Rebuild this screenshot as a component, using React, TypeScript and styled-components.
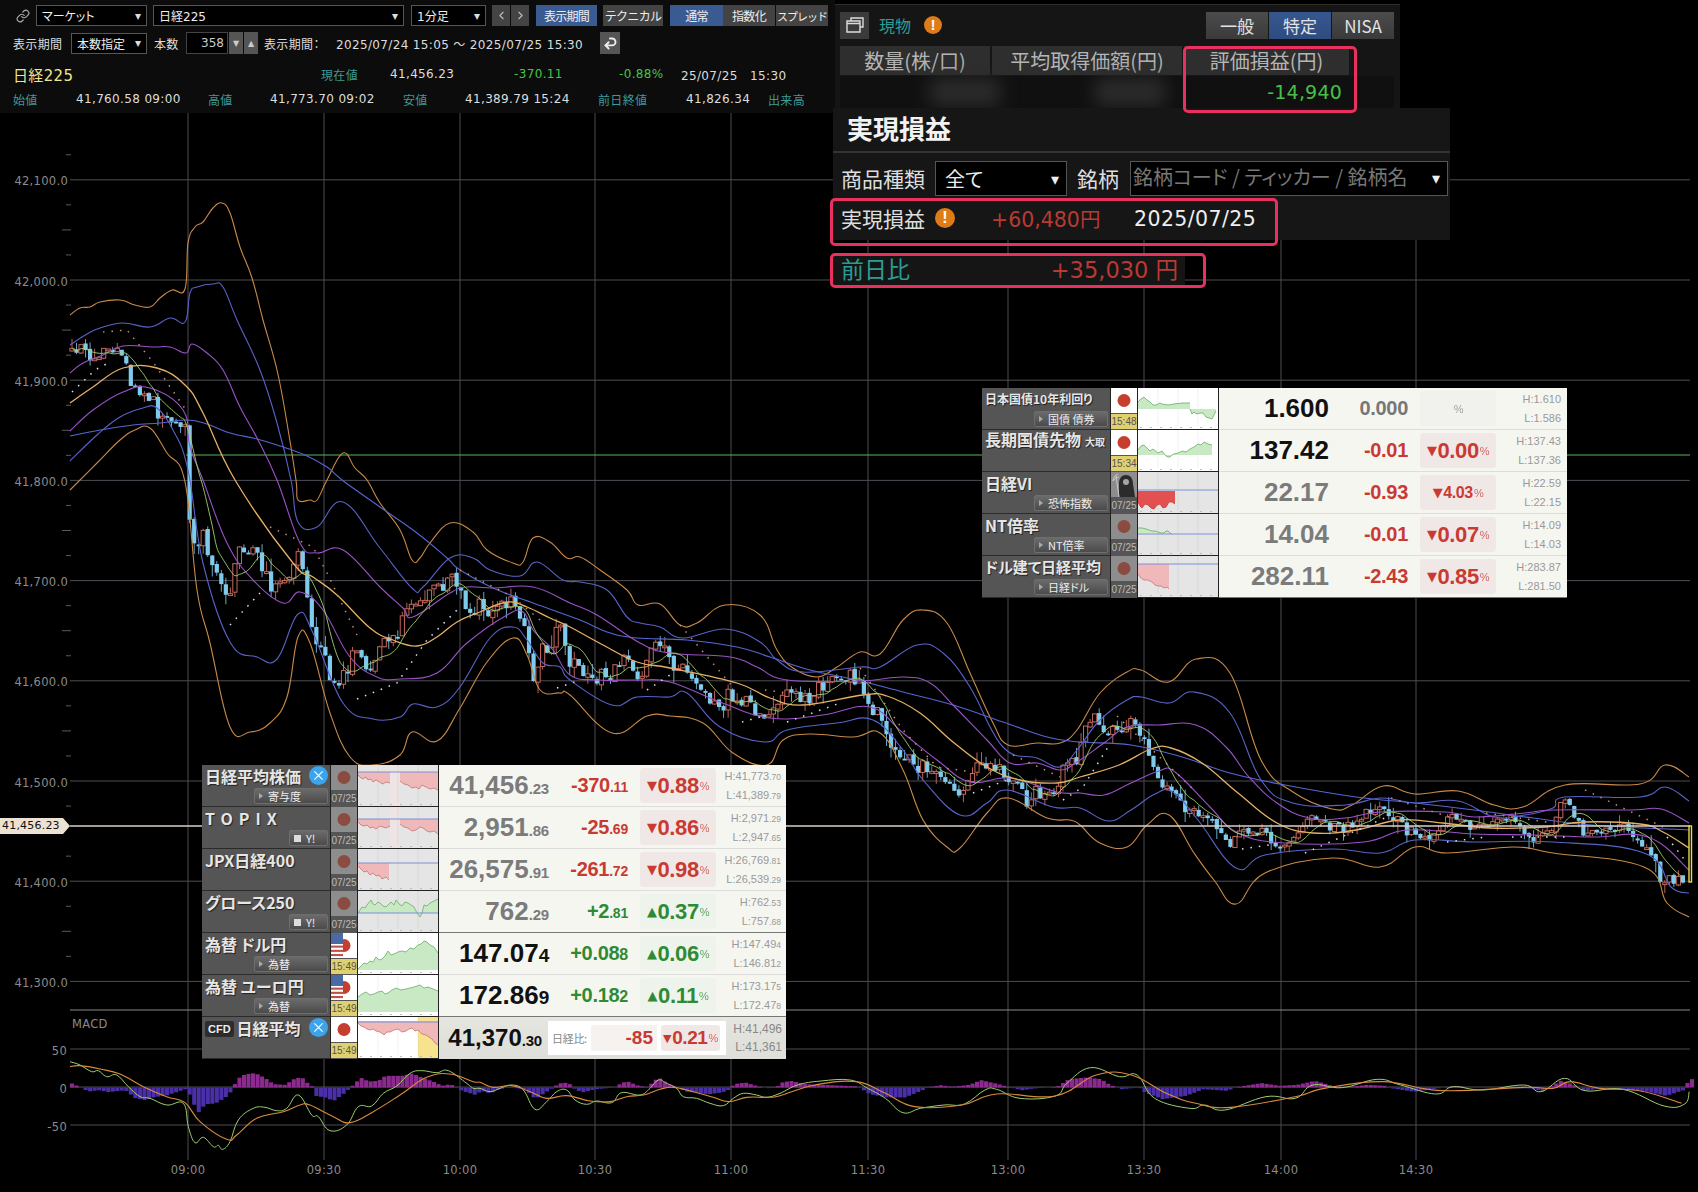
import React from 'react';
import styled, { createGlobalStyle } from 'styled-components';
import { Link as LinkIcon, Undo2, ChevronLeft, ChevronRight } from 'lucide-react';

const UI = '"DejaVu Sans","Noto Sans CJK JP",sans-serif';
const JP = '"Noto Sans CJK JP","Liberation Sans",sans-serif';
const NUM = '"Liberation Sans","Noto Sans CJK JP",sans-serif';

const Global = createGlobalStyle`
  html, body { margin: 0; padding: 0; background: #000; }
  body { font-family: ${UI}; font-feature-settings: "palt"; }
`;

/* ---------- chart geometry ---------- */
type P = number[];
const crop = (ox: number, oy: number, sx: number, sy: number, a: P): P =>
  a.map((v, i) => (i % 2 === 0 ? ox + v / sx : oy + v / sy));

const smooth = (a: P): string => {
  let d = `M${a[0]} ${a[1]}`;
  for (let i = 0; i < a.length - 2; i += 2) {
    const x0 = a[Math.max(i - 2, 0)], y0 = a[Math.max(i - 1, 1)];
    const x1 = a[i], y1 = a[i + 1], x2 = a[i + 2], y2 = a[i + 3];
    const x3 = a[Math.min(i + 4, a.length - 2)], y3 = a[Math.min(i + 5, a.length - 1)];
    const t = 5;
    d += `C${(x1 + (x2 - x0) / t).toFixed(1)} ${(y1 + (y2 - y0) / t).toFixed(1)} ${(x2 - (x3 - x1) / t).toFixed(1)} ${(y2 - (y3 - y1) / t).toFixed(1)} ${x2} ${y2}`;
  }
  return d;
};
const at = (a: P, x: number): number => {
  if (x <= a[0]) return a[1];
  for (let i = 0; i < a.length - 2; i += 2) {
    if (x <= a[i + 2]) return a[i + 1] + ((a[i + 3] - a[i + 1]) * (x - a[i])) / (a[i + 2] - a[i] || 1);
  }
  return a[a.length - 1];
};

const orangeUp: P = [70,315,80,308,90,307,100,302,120,300,135,305,150,307,160,298,172,290,185,289,188,243,195,227,203,222,213,208,222,203,230,213,240,247,252,278,263,320,277,370,287,423,296,480,298,500,310,500,317,500,327,480,343,453,355,468,367,480,380,503,400,530,412,560,420,558,430,543,450,523,473,532,487,550,513,563,523,562,533,538,550,542,567,558,580,557,600,570,627,590,638,605,660,604,680,625,697,623,725,605,760,615,777,650,793,668,817,677,837,667,860,652,880,654,903,620,923,610,947,623,970,673,993,723,1008,745,1037,743,1060,743,1077,730,1100,693,1127,672,1141,670,1169,682,1196,659,1230,673,1261,760,1293,792,1332,809,1352,805,1383,786,1415,794,1458,791,1494,805,1523,807,1565,785,1640,784,1665,765,1689,777];
const blueUp: P = [70,345,87,334,100,328,123,323,150,327,170,318,185,322,190,293,197,287,213,284,223,287,237,320,260,370,277,423,291,480,298,522,317,527,343,502,380,548,412,588,423,587,450,558,473,558,490,570,520,576,537,562,563,580,580,582,607,590,627,617,640,623,660,627,683,638,725,629,760,642,777,660,803,672,860,667,880,667,917,645,943,653,970,687,1003,747,1037,758,1060,767,1077,750,1100,720,1127,700,1141,697,1169,703,1194,692,1230,713,1261,780,1293,803,1345,805,1381,798,1415,803,1458,801,1494,817,1525,815,1553,808,1565,797,1640,797,1665,787,1689,801];
const longBlue: P = [70,436,100,430,133,425,160,423,187,420,207,424,230,433,257,439,280,446,305,455,327,467,342,480,380,507,417,533,447,558,460,570,493,588,533,603,580,620,607,632,637,638,687,640,737,647,770,657,810,670,857,680,903,692,953,705,1003,722,1047,737,1080,742,1131,745,1182,757,1230,773,1285,785,1356,797,1415,803,1474,810,1533,818,1592,825,1689,830];
const purpleUp: P = [70,373,83,363,103,355,123,346,153,347,170,347,186,353,192,344,207,353,223,370,240,407,257,438,277,480,300,543,317,553,343,550,380,587,403,608,413,617,450,593,467,587,493,588,533,587,570,603,597,615,640,643,670,653,730,657,757,667,787,680,860,681,903,677,930,683,953,705,987,740,1010,763,1037,763,1060,770,1077,762,1104,743,1127,727,1159,725,1196,725,1226,747,1249,777,1277,803,1309,818,1345,818,1380,812,1445,812,1474,817,1525,813,1553,810,1632,810,1661,809,1689,823];
const mid: P = [70,403,93,387,123,368,157,368,185,385,203,413,235,480,293,563,313,577,337,595,370,628,393,640,417,646,437,637,457,622,480,612,507,602,527,607,550,618,570,627,603,645,637,662,670,668,737,683,770,698,803,705,863,695,887,696,920,713,953,742,987,767,1020,780,1057,783,1080,777,1119,765,1151,749,1171,748,1202,763,1238,793,1277,823,1313,833,1356,830,1399,820,1443,823,1490,828,1545,827,1584,822,1640,824,1663,832,1689,848];
const purpleLo: P = [70,431,93,410,123,392,150,388,183,410,190,447,203,480,227,543,253,580,283,603,300,592,323,610,350,657,377,677,400,679,437,673,467,643,507,615,523,612,533,630,553,650,570,675,597,680,637,680,670,682,720,702,770,718,823,715,870,707,903,733,937,760,970,782,1010,778,1057,792,1080,793,1104,795,1131,783,1159,771,1175,772,1210,807,1238,833,1285,843,1364,842,1407,830,1474,834,1533,835,1592,837,1648,837,1689,870];
const blueLo: P = [70,461,97,435,120,417,143,408,157,408,173,430,188,470,203,563,230,642,257,657,277,659,298,614,313,633,343,703,373,719,400,717,413,704,437,707,460,687,490,638,513,627,527,640,543,663,560,667,570,680,612,705,637,697,670,697,687,693,720,727,765,742,787,730,837,723,873,720,903,750,923,780,960,815,987,803,1007,790,1053,807,1080,808,1108,821,1131,810,1155,794,1173,792,1198,820,1236,868,1265,855,1332,849,1380,853,1415,840,1474,842,1553,842,1644,853,1671,887,1689,893];
const orangeLo: P = [70,490,97,463,120,440,135,430,150,428,167,453,185,482,197,590,210,643,230,727,250,732,270,723,287,697,298,637,310,643,330,713,350,757,373,765,400,755,412,732,437,741,460,708,487,662,513,638,527,655,540,690,560,693,570,695,612,733,647,716,670,716,703,723,733,753,767,765,783,740,810,734,853,737,880,733,903,770,923,820,947,847,960,848,987,813,1008,798,1047,818,1070,820,1080,825,1100,843,1127,847,1147,825,1169,815,1194,853,1214,880,1236,904,1265,873,1332,858,1380,867,1415,847,1447,853,1514,847,1553,853,1644,867,1667,903,1689,917];
const price: P = [72,351,93,357,120,347,127,363,132,387,145,398,153,403,158,418,185,423,186,453,192,557,203,530,210,557,223,593,230,587,237,557,247,547,260,560,273,587,290,580,298,555,305,583,313,627,323,653,332,687,343,678,357,650,367,670,380,643,400,630,408,597,427,595,452,580,462,600,483,613,507,600,523,620,533,677,543,650,560,630,570,660,587,673,607,678,623,658,640,683,655,633,667,657,680,675,697,687,703,703,717,715,733,700,747,702,767,718,783,700,790,690,810,697,827,680,853,675,863,695,873,708,887,733,900,763,913,763,933,768,948,787,963,790,983,760,1000,773,1020,793,1053,795,1062,767,1077,757,1090,723,1092,717,1115,733,1131,720,1147,748,1155,777,1175,793,1186,812,1206,813,1218,833,1230,847,1238,833,1261,832,1273,843,1289,847,1313,813,1328,828,1348,827,1380,803,1407,830,1435,837,1449,817,1474,830,1514,818,1531,840,1549,833,1563,797,1573,810,1586,837,1624,823,1636,837,1650,850,1659,873,1663,880,1689,882];

const BAR = 4.525;
let seed = 17;
const rnd = () => { seed = (seed * 16807) % 2147483647; return seed / 2147483647; };
type Candle = { x: number; o: number; c: number; h: number; l: number };
const candles: Candle[] = [];
{
  let prev = at(price, 70);
  for (let x = 72; x < 1687; x += BAR) {
    const amp = x > 190 && x < 1110 ? 17 : 10;
    const big = rnd() > 0.9 ? 1.8 : 1;
    const c = at(price, x) + (rnd() - 0.5) * amp * big;
    const o = prev;
    const top = Math.min(o, c), bot = Math.max(o, c);
    candles.push({ x, o, c, h: top - rnd() * rnd() * 14, l: bot + rnd() * rnd() * 14 });
    prev = c + (rnd() - 0.5) * 3;
  }
}
const ma: P = [];
candles.forEach((k, i) => {
  const w = candles.slice(Math.max(0, i - 6), i + 1);
  ma.push(+k.x.toFixed(1), +(w.reduce((s, q) => s + q.c, 0) / w.length).toFixed(1));
});

const sarAbove: P[] = [[103,332,127,330,153,362,186,410],[270,527,313,547,327,573,357,635],[460,570,513,597,540,620],[680,625,710,660,733,687],[765,690,787,693],[860,668,903,730,937,767,973,772],[1013,755,1060,777],[1117,716,1194,790],[1391,798,1474,825],[1486,813,1553,823],[1585,790,1663,827]];
const sarBelow: P[] = [[72,392,95,370,110,362],[230,625,260,593],[357,699,397,683,427,640,457,610],[557,688,580,680],[647,690,673,673],[742,722,760,717],[787,722,843,702],[973,793,1007,780],[1063,800,1083,787,1108,747],[1242,849,1269,845],[1305,853,1387,817],[1447,842,1486,837],[1512,837,1565,837],[1667,837,1687,863]];

const y = (p: number) => 781 + (41500 - p) * 1.002;
const priceLabels = [42100, 42000, 41900, 41800, 41700, 41600, 41500, 41400, 41300];
const ticks: number[] = [];
for (let p = 42125; p >= 41325; p -= 25) if (p % 100 !== 0 && p !== 41450) ticks.push(p);
const times: [number, string][] = [[188,'09:00'],[324,'09:30'],[460,'10:00'],[595,'10:30'],[731,'11:00'],[868,'11:30'],[1008,'13:00'],[1144,'13:30'],[1281,'14:00'],[1416,'14:30']];

const histCtl: P = [
  ...[210,12,230,3,260,-12,290,-8,320,-14,350,-10,370,-8,400,-32,430,-38,460,-28,490,-25,520,-15,550,-5,570,-30,585,-80,610,-50,640,-48,670,-30,690,-10,705,25,730,40,760,43,790,28,815,10,850,8,880,28,900,30,920,10,935,0,940,-25,970,-30,995,-40,1030,-15,1045,0,1060,12,1075,30,1100,18,1130,20,1150,35,1200,35,1230,42,1260,30,1300,15,1320,5,1345,10,1365,0,1380,-10,1420,-22].map(v => v / 3),
  ...[0,-10,25,-18,50,-5,80,0,130,-5,160,-35,190,-15,215,0,230,12,260,15,270,0,300,-15,340,-5,400,0,420,15,440,17,470,5,500,0,510,15,530,30,560,10,590,0,610,-12,680,-20,720,-15,745,-5,755,10,790,15,830,3,860,-2,890,5].map((v,i)=> i%2===0 ? 480+v/3 : v/3),
  ...[0,15,15,20,40,10,70,8,130,3,150,-20,180,-30,210,-30,240,-8,250,0,270,7,290,2,320,8,340,22,370,10,390,0,410,-8,430,-3,470,2,490,25,520,30,545,25,560,8,580,-5,610,0,620,-15,650,-35,690,-25,720,-5,760,-10,775,0,800,8,820,13,850,5,880,8,910,20,940,5,960,0,1000,8,1030,5,1040,-2,1080,-13,1130,0,1150,5,1170,0,1200,0,1280,-3,1300,-12,1330,20,1350,10,1370,-10,1400,-3,1470,-10,1510,-25,1540,-8,1550,25].map((v,i)=> i%2===0 ? 780+v/1.708 : v/3),
];
const hist: { x: number; h: number }[] = [];
for (let x = 70; x < 1690; x += BAR) hist.push({ x, h: at(histCtl, x) });

const macdGreen: P = [
  ...crop(0,1000,3,3,[210,185,240,195,275,215,295,212,320,230,350,225,385,260,420,290,450,295,500,315,550,310,565,380,585,428,610,412,640,440,655,436,668,448,690,425,715,360,760,325,795,322,830,332,860,325,895,285,935,345,955,350,990,392,1040,375,1075,320,1115,318,1150,280,1190,258,1230,220,1265,212,1310,218,1345,212,1400,250,1420,265]),
  ...crop(480,1040,3,3,[0,145,30,155,60,145,95,135,130,150,165,208,200,185,230,155,260,150,285,180,320,193,350,183,395,188,425,158,480,165,510,145,535,120,560,130,590,145,610,170,650,175,690,190,730,197,760,175,790,160,830,165,860,172]),
  ...crop(780,1030,1.708,3,[0,190,30,165,70,153,120,150,150,175,180,205,210,248,240,235,280,225,315,222,350,180,370,178,410,205,470,198,490,160,530,113,580,140,610,135,640,205,700,235,725,225,760,240,830,200,880,205,910,165,960,173,1020,148,1060,165,1120,192,1150,170,1200,180,1270,165,1300,185,1340,145,1375,182,1440,178,1510,228,1545,222,1553,185]),
];
const macdOrange: P = [
  ...crop(0,1000,3,3,[210,200,240,197,300,207,360,222,430,260,500,290,555,308,600,365,680,418,710,405,770,355,850,335,900,315,930,315,1000,350,1050,368,1120,335,1200,285,1280,232,1350,222,1420,245]),
  ...crop(480,1040,3,3,[0,127,40,142,95,137,150,155,200,175,260,167,330,183,390,185,440,170,490,165,540,148,580,142,640,155,700,172,745,185,800,172,860,172]),
  ...crop(780,1030,1.708,3,[0,197,60,165,130,155,180,190,230,230,310,225,370,192,470,198,540,135,600,135,660,190,710,220,770,232,880,200,930,175,1030,155,1130,182,1270,172,1320,175,1350,155,1400,175,1470,183,1540,220]),
];

/* ---------- page ---------- */
const Page = styled.div`
  width: 1698px; height: 1192px; position: relative; overflow: hidden;
  background: #000; color: #ddd; font-size: 12px;
`;
const ChartSvg = styled.svg`
  display: block; width: 1698px; height: 1079px;
`;
const AxisText = styled.text`
  font-family: "DejaVu Sans", sans-serif; font-size: 11.5px; fill: #8b8b8b; letter-spacing: .3px;
`;
const PriceTag = styled.div`
  position: absolute; left: 0; top: 818px; width: 70px; height: 16px;
  background: #ece2d4; color: #111; font-size: 11px; line-height: 16px; padding-left: 2px; box-sizing: border-box;
  clip-path: polygon(0 0, 90% 0, 100% 50%, 90% 100%, 0 100%); letter-spacing: .2px;
`;

/* ---------- tool panel ---------- */
const ToolPanel = styled.header`
  width: 835px; height: 113px; box-sizing: border-box; background: #0c0c0c;
  display: flex; flex-direction: column; padding-top: 5px;
`;
const ToolRow = styled.div<{ $h?: number; $top?: number }>`
  display: flex; align-items: center; height: ${p => p.$h ?? 21}px; margin-top: ${p => p.$top ?? 0}px; padding-left: 13px;
`;
const LinkSlot = styled.span`
  width: 23px; display: flex; justify-content: flex-end; padding-right: 6px; box-sizing: border-box; color: #aaa;
`;
const SelectBox = styled.div<{ $w: number; $ml?: number }>`
  width: ${p => p.$w}px; margin-left: ${p => p.$ml ?? 0}px; height: 21px; box-sizing: border-box;
  background: #000; border: 1px solid #555; display: flex; align-items: center; justify-content: space-between;
  padding: 0 5px; font-size: 12px; color: #eee; font-family: ${UI};
  &::after { content: '▾'; font-size: 12px; color: #ddd; }
`;
const NavBtn = styled.span`
  width: 18px; height: 21px; background: #444; color: #bbb; display: flex; align-items: center; justify-content: center;
`;
const NavPair = styled.div`
  display: flex; gap: 1px; margin-left: 6px;
`;
const ToolBtn = styled.button<{ $w: number; $ml?: number; $on?: boolean; $tight?: boolean }>`
  width: ${p => p.$w}px; margin-left: ${p => p.$ml ?? 0}px; height: 21px; padding: 0; border: 0;
  background: ${p => (p.$on ? '#3a5b92' : '#434343')}; color: #eee; font-size: ${p => (p.$tight ? 11 : 12)}px; font-family: ${JP};
  letter-spacing: ${p => (p.$tight ? -1 : -0.7)}px; white-space: nowrap;
`;
const Lbl = styled.span<{ $w?: number; $c?: string; $s?: number; $ml?: number }>`
  display: inline-block; width: ${p => (p.$w ? `${p.$w}px` : 'auto')}; flex: none; margin-left: ${p => p.$ml ?? 0}px;
  color: ${p => p.$c ?? '#ddd'}; font-size: ${p => p.$s ?? 12}px; letter-spacing: .35px; white-space: nowrap;
`;
const NumInput = styled.div`
  width: 42px; height: 22px; box-sizing: border-box; background: #000; border: 1px solid #444; color: #ccc;
  text-align: right; padding-right: 3px; line-height: 20px;
`;
const Spin = styled.div`
  display: flex; gap: 1px; margin: 0 6px 0 1px;
`;
const SpinBtn = styled.span`
  width: 14px; height: 22px; background: #555; color: #ccc; font-size: 8px; display: flex; align-items: center; justify-content: center;
`;
const UndoBtn = styled.span`
  width: 20px; height: 22px; background: #555; color: #eee; display: flex; align-items: center; justify-content: center;
  & svg { transform: scaleY(-1); }
`;

/* ---------- position / realised panels ---------- */
const Highlight = styled.div<{ $l: number; $t: number; $w: number; $h: number }>`
  position: absolute; left: ${p => p.$l}px; top: ${p => p.$t}px; width: ${p => p.$w}px; height: ${p => p.$h}px;
  box-sizing: border-box; border: 3px solid #e8315f; border-radius: 5px; pointer-events: none;
`;
const PosPanel = styled.section`
  position: absolute; left: 835px; top: 4px; width: 565px; height: 104px; box-sizing: border-box;
  background: #151515; border-top: 1px solid #2e2e2e; padding: 6px 6px 0 5px;
`;
const PosHead = styled.div`
  display: flex; align-items: center; height: 28px;
`;
const WinBtn = styled.span`
  width: 29px; height: 27px; background: #3b3b3b; color: #ddd; display: flex; align-items: center; justify-content: center;
`;
const Teal = styled.span<{ $s?: number; $ml?: number; $mr?: number }>`
  color: #2a9d98; font-size: ${p => p.$s ?? 16}px; font-family: ${JP}; margin: 0 ${p => p.$mr ?? 0}px 0 ${p => p.$ml ?? 0}px;
`;
const WarnDot = styled.span<{ $s?: number }>`
  width: ${p => p.$s ?? 18}px; height: ${p => p.$s ?? 18}px; border-radius: 50%; background: #df7c19; color: #fff;
  font-weight: bold; font-size: ${p => (p.$s ?? 18) - 4}px; font-family: ${NUM}; display: inline-flex; align-items: center; justify-content: center;
  flex: none;
`;
const Seg = styled.div`
  margin-left: auto; display: flex; gap: 1px;
`;
const SegBtn = styled.span<{ $on?: boolean }>`
  width: 62px; height: 27px; background: ${p => (p.$on ? 'linear-gradient(#36578f,#2e4c80)' : 'linear-gradient(#4c4c4c,#3a3a3a)')};
  color: #e2e2e2; font-size: 17px; font-family: ${JP}; display: flex; align-items: center; justify-content: center;
`;
const TableHead = styled.div`
  display: flex; gap: 2px; margin-top: 7px; height: 29px;
`;
const Th = styled.div<{ $w: number }>`
  width: ${p => p.$w}px; background: #2e2e2e; color: #b5b5b5; font-size: 20px; font-family: ${JP};
  display: flex; align-items: center; justify-content: center; white-space: nowrap;
`;
const TableBody = styled.div`
  position: relative; height: 32px; display: flex; align-items: center; justify-content: flex-end;
  padding-right: 52px; background: #101010; margin-top: 1px;
`;
const Blur = styled.span<{ $l: number }>`
  position: absolute; left: ${p => p.$l}px; top: 2px; width: 70px; height: 28px; background: #2c2c2c; filter: blur(9px);
`;
const GreenVal = styled.span`
  color: #48c048; font-size: 19px; font-family: "DejaVu Sans", sans-serif; position: relative; letter-spacing: .2px;
`;
const RealPanel = styled.section`
  position: absolute; left: 833px; top: 108px; width: 617px; height: 132px; background: #161616;
`;
const RealTitle = styled.h2`
  margin: 0; height: 45px; box-sizing: border-box; padding-left: 14px; line-height: 40px; color: #f2f2f2; font-size: 26px;
  font-weight: 700; font-family: ${JP}; border-bottom: 2px solid #333;
`;
const FilterRow = styled.div`
  display: flex; align-items: center; height: 36px; margin-top: 7px; padding-left: 8px;
`;
const FilterLabel = styled.span<{ $w: number; $ml?: number }>`
  width: ${p => p.$w}px; color: #dedede; font-size: 21px; font-family: ${JP}; flex: none; margin-left: ${p => p.$ml ?? 0}px; white-space: nowrap;
`;
const FilterSelect = styled.div<{ $w: number; $ph?: boolean }>`
  width: ${p => p.$w}px; height: 35px; box-sizing: border-box; background: #000; border: 1px solid #555; flex: none;
  color: ${p => (p.$ph ? '#777' : '#eee')}; font-size: 20px; font-family: ${JP}; display: flex; align-items: center; justify-content: space-between;
  padding: 0 7px ${p => (p.$ph ? 3 : 0)}px ${p => (p.$ph ? 2 : 9)}px; white-space: nowrap;
  &::after { content: '▾'; color: #eee; font-size: 16px; }
`;
const ResultRow = styled.div`
  display: flex; align-items: center; height: 38px; margin-top: 3px; padding-left: 8px; font-size: 20px;
`;
const RedVal = styled.span<{ $w?: number; $ml?: number; $s?: number }>`
  color: #b93a34; font-size: ${p => p.$s ?? 20.5}px; font-family: "DejaVu Sans", ${JP}; flex: none; white-space: nowrap;
  width: ${p => (p.$w ? `${p.$w}px` : 'auto')}; margin-left: ${p => p.$ml ?? 0}px;
`;
const DateVal = styled.span`
  color: #eee; font-size: 20.5px; font-family: "DejaVu Sans", sans-serif; letter-spacing: .4px; margin-top: 2px;
`;
const PrevPanel = styled.section`
  position: absolute; left: 833px; top: 253px; width: 352px; height: 33px; background: #151515;
  display: flex; align-items: center; justify-content: space-between; padding: 0 7px 4px 8px; box-sizing: border-box;
`;

/* ---------- quote widgets ---------- */
const Widget = styled.section<{ $l: number; $t: number; $w: number }>`
  position: absolute; left: ${p => p.$l}px; top: ${p => p.$t}px; width: ${p => p.$w}px;
  display: flex; flex-direction: column; background: #222;
`;
const WRow = styled.div`
  display: flex; height: 42px; gap: 1px;
`;
const NameCell = styled.div`
  width: 128px; flex: none; box-sizing: border-box; background: #555; padding: 0 2px 1px 3px; border-bottom: 1px solid #2a2a2a;
  display: flex; flex-direction: column; justify-content: space-between;
`;
const NameTop = styled.div`
  display: flex; align-items: center; justify-content: space-between; height: 21px;
`;
const Name = styled.span<{ $s?: number; $sp?: number }>`
  color: #e6e6e6; font-weight: 700; font-size: ${p => p.$s ?? 16}px; font-family: ${JP}; white-space: nowrap; line-height: 20px;
  letter-spacing: ${p => p.$sp ?? 0}px; text-shadow: 1px 1px 1px #222;
`;
const NameMini = styled.small`
  font-size: 10px; margin-left: 4px; letter-spacing: 0;
`;
const CfdTag = styled.span`
  background: #2d2d2d; color: #eee; font: bold 11px ${NUM}; padding: 2px 3px; border-radius: 2px; margin-right: 3px; vertical-align: 2px;
`;
const XDot = styled.span`
  width: 19px; height: 19px; border-radius: 50%; background: #3da3ea; color: #fff; display: flex; align-items: center; justify-content: center; flex: none;
`;
const SubRow = styled.div`
  display: flex; justify-content: flex-end; height: 17px;
`;
const SubBtn = styled.span<{ $w?: number }>`
  width: ${p => p.$w ?? 74}px; height: 16px; box-sizing: border-box; background: linear-gradient(#6b6b6b,#4b4b4b); border: 1px solid #6e6e6e; border-radius: 2px;
  color: #eee; font-size: 11px; font-family: ${JP}; display: flex; align-items: center; gap: 5px; padding-left: 4px; white-space: nowrap;
`;
const SubArrow = styled.i`
  width: 0; height: 0; border-left: 4px solid #aaa; border-top: 3px solid transparent; border-bottom: 3px solid transparent; flex: none;
`;
const YIcon = styled.i`
  width: 7px; height: 7px; background: #ddd; flex: none;
`;
const FlagCol = styled.div`
  width: 26px; flex: none; display: flex; flex-direction: column; gap: 1px; background: #555;
`;
const FlagBox = styled.div<{ $live?: boolean }>`
  height: 25px; background: ${p => (p.$live ? '#fff' : '#8d8d8d')}; display: block;
`;
const FlagTime = styled.div<{ $live?: boolean }>`
  height: 15px; background: ${p => (p.$live ? '#e1d06f' : 'transparent')}; color: ${p => (p.$live ? '#555' : '#bbb')};
  font: 10px ${NUM}; line-height: 15px; text-align: center;
`;
const ThumbBox = styled.svg`
  width: 80px; height: 41px; flex: none; display: block;
`;
const DataCell = styled.div<{ $dark?: boolean }>`
  flex: 1; min-width: 0; display: grid; grid-template-columns: 110px 79px 88px 65px;
  align-items: center; background: #f6f6f1; border-bottom: 1px solid ${p => (p.$dark ? '#777' : '#ddd')};
`;
const PctSlot = styled.div`
  padding-left: 12px;
`;
const CfdData = styled.div`
  flex: 1; min-width: 0; display: flex; align-items: center; background: linear-gradient(#e6e6e0,#dededa);
`;
const Main = styled.span<{ $live?: boolean; $s?: number; $w?: number }>`
  text-align: right; font: bold ${p => p.$s ?? 26}px ${NUM}; color: ${p => (p.$live ? '#111' : '#7b7b7b')}; white-space: nowrap;
  flex: none; width: ${p => (p.$w ? `${p.$w}px` : 'auto')};
`;
const Dec = styled.span<{ $s?: number }>`
  font-size: ${p => p.$s ?? 15}px; letter-spacing: -.2px;
`;
const Chg = styled.span<{ $tone: string }>`
  text-align: right; font: bold 20px ${NUM}; letter-spacing: -.3px; white-space: nowrap;
  color: ${p => (p.$tone === 'red' ? '#c93a33' : p.$tone === 'green' ? '#2f8a35' : '#777')};
`;
const PctBox = styled.span<{ $tone: string; $s?: number; $h?: number; $w?: number }>`
  height: ${p => p.$h ?? 35}px; width: ${p => p.$w ?? 76}px; box-sizing: border-box; border-radius: 3px; display: flex; align-items: center; justify-content: center;
  background: ${p => (p.$tone === 'red' ? '#f0e8e6' : p.$tone === 'green' ? '#eef3ec' : '#f1f1ed')};
  color: ${p => (p.$tone === 'red' ? '#c93a33' : p.$tone === 'green' ? '#2f8a35' : '#888')};
  font: bold ${p => p.$s ?? 22}px ${NUM}; letter-spacing: -.4px; white-space: nowrap;
`;
const Arrow = styled.span<{ $s?: number }>`
  font: ${p => p.$s ?? 13}px "DejaVu Sans", sans-serif; margin-right: 1px;
`;
const Unit = styled.span`
  font: 11px ${NUM}; color: inherit; opacity: .75; margin-left: 1px;
`;
const HL = styled.div`
  display: flex; flex-direction: column; align-items: flex-end; font: 11px ${NUM}; color: #999; line-height: 18px; white-space: nowrap;
`;
const HLDec = styled.span`
  font-size: 8.5px;
`;
const CompareBox = styled.div`
  width: 178px; margin-left: 6px; height: 34px; box-sizing: border-box; background: #fff; display: flex; align-items: center; padding: 0 4px; gap: 4px;
`;
const CompareLabel = styled.span`
  color: #888; font: 11px ${JP}; white-space: nowrap; letter-spacing: -.3px; width: 35px; flex: none;
`;
const CompareVal = styled.span`
  width: 66px; height: 26px; background: #f5f2f0; border-radius: 2px; display: flex; align-items: center; justify-content: flex-end; padding-right: 4px; box-sizing: border-box;
  color: #c93a33; font: bold 19px ${NUM}; flex: none;
`;
const CfdHL = styled(HL)`
  margin-left: auto; padding-right: 4px; color: #888; font-size: 12px;
`;

/* ---------- small drawings ---------- */
const XMark = () => (
  <svg width="11" height="11" viewBox="0 0 24 24" fill="none" stroke="#fff" strokeWidth="2.6"><path d="M3 3l18 18M21 3L3 21" /></svg>
);
const FlagArt = ({ kind, live }: { kind: string; live: boolean }) => {
  if (kind === 'reaper')
    return (
      <svg width="26" height="25" viewBox="0 0 26 25">
        <path d="M8 25V12c0-6 3-9 7-9s7 3 7 9l2 13z" fill="#2b2b2b" />
        <circle cx="15" cy="10" r="3" fill="#a5a5a5" />
        <path d="M7 2C4 3 2 6 2 9c2-3 4-4 6-4M5 4l3 21" stroke="#ccc" strokeWidth="1" fill="none" />
      </svg>
    );
  return (
    <svg width="26" height="25" viewBox="0 0 26 25">
      <circle cx="13" cy="12.5" r="6.5" fill={live ? '#c63f2e' : '#8b4b40'} />
      {kind === 'us' && (
        <g>
          <rect x="0" y="0" width="12" height="25" fill="#fff" />
          {[0, 1, 2, 3, 4, 5].map(i => <rect key={i} x="0" y={i * 4.2} width="12" height="2.1" fill="#c0504a" />)}
          <rect x="0" y="0" width="12" height="11" fill="#4a6aa5" />
        </g>
      )}
    </svg>
  );
};
type Thumb = { bg: string; base: number; color: string; fill: string; segs: P[]; blue?: number; yellow?: boolean; shade?: number[] };
const ThumbArt = ({ t }: { t: Thumb }) => (
  <ThumbBox viewBox="0 0 80 41">
    <rect width="80" height="41" fill={t.bg} />
    {t.shade && <rect x={t.shade[0]} width={t.shade[1]} height="41" fill="#eee4e4" />}
    {t.yellow && <rect x="60" width="20" height="41" fill="#f7e38e" />}
    {[20, 40, 60].map(x => <line key={x} x1={x} x2={x} y1="0" y2="38" stroke="#0000000f" />)}
    {t.segs.map((s, i) => {
      const pts = s.reduce<string[]>((acc, v, k) => (k % 2 === 0 ? [...acc, `${v},${s[k + 1]}`] : acc), []);
      return (
        <g key={i}>
          <polygon points={`${s[0]},${t.base} ${pts.join(' ')} ${s[s.length - 2]},${t.base}`} fill={t.fill} />
          <polyline points={pts.join(' ')} fill="none" stroke={t.color} strokeWidth=".8" />
        </g>
      );
    })}
    {t.blue !== undefined && <line x1="0" x2="80" y1={t.blue} y2={t.blue} stroke="#7d8fd8" strokeWidth="1" />}
    <line x1="2" x2="78" y1="39.5" y2="39.5" stroke="#bbb" strokeDasharray="2 8" />
  </ThumbBox>
);

const RED = { color: '#c97272', fill: '#f0b9b9' };
const GRN = { color: '#68ad68', fill: '#c9e8c4' };
const GREY = '#e5e5e5';

type Q = {
  name: React.ReactNode; size?: number; sp?: number; x?: boolean; sub?: string; yBtn?: boolean; flag: string; live: boolean; time: string; thumb: Thumb;
  main: [string, string?]; chg: [string, string?]; tone: string; pct?: string; pctS?: number; hi: [string, string?]; lo: [string, string?]; dark?: boolean;
};
const n225: Thumb = { bg: GREY, base: 7, blue: 7, ...RED, shade: [32, 10], segs: [[0,10,3,13,5,14,8,12,10,15,13,14,15,17,18,15,20,16,23,18,25,19,28,17,32,18],[42,16,46,19,50,20,54,23,58,22,61,24,64,20,68,22,72,24,76,23,80,25]] };
const topixT: Thumb = { bg: GREY, base: 12, blue: 12, ...RED, shade: [32, 10], segs: [[0,15,3,18,6,19,9,18,12,21,15,20,18,22,22,19,25,20,28,21,32,19],[42,17,46,20,50,21,54,24,58,23,62,20,65,21,69,24,72,25,76,24,80,27]] };
const jpxT: Thumb = { bg: GREY, base: 14, blue: 14, ...RED, segs: [[0,17,3,20,6,23,9,22,12,26,15,24,18,27,21,26,24,30,28,28,31,31]] };
const growT: Thumb = { bg: GREY, base: 22, blue: 22, ...GRN, segs: [[0,22,4,16,7,17,9,14,13,9,15,13,17,14,20,11,22,12,25,15,28,16,31,13,33,11,36,14,38,9,41,13,44,15,47,11,50,12,53,14,56,16,59,22,62,26,64,22,66,14,69,15,72,12,76,10,80,8]] };
const usd: Thumb = { bg: '#fff', base: 37, ...GRN, segs: [[0,36,3,33,6,30,9,31,12,28,15,29,18,24,21,27,24,26,27,23,30,18,33,22,36,21,40,19,44,18,48,19,52,15,56,16,60,12,63,11,66,8,69,9,72,12,76,14,80,20]] };
const eur: Thumb = { bg: '#fff', base: 37, ...GRN, segs: [[0,22,4,19,8,17,12,20,16,19,20,17,24,16,27,19,30,18,34,15,38,13,43,15,48,14,52,13,56,12,59,11,62,10,66,13,70,12,75,14,80,16]] };
const cfdT: Thumb = { bg: '#fff', base: 4, blue: 5, ...RED, yellow: true, segs: [[0,6,3,9,6,10,9,12,12,13,15,12,18,14,22,15,26,18,29,15,32,15,36,13,40,12,44,15,48,14,51,12,54,11,57,14,60,13,64,17,68,18,71,20,74,22,77,26,80,28]] };
const bondT: Thumb = { bg: '#fff', base: 21, ...GRN, segs: [[0,14,3,11,6,9,9,12,12,14,15,17,18,17,22,15,24,16,30,17,36,16,44,15,52,15],[52,21,54,26,56,24,59,26,62,25,65,25,68,29,71,30,74,31,76,27,78,23]] };
const futT: Thumb = { bg: '#fff', base: 25, ...GRN, segs: [[0,20,3,16,6,15,9,18,12,21,15,19,20,23,24,21,28,26,30,27,32,27,34,25,36,24,40,23,44,21,48,22,52,19,56,17,60,14,63,15,66,12,70,14,74,15]] };
const viT: Thumb = { bg: GREY, base: 19, blue: 18, color: '#c83c3c', fill: '#e25050', segs: [[0,30,2,34,4,36,7,32,10,33,13,36,16,37,19,33,22,32,25,36,28,35,31,30,34,30,37,32]] };
const ntT: Thumb = { bg: GREY, base: 19, blue: 20, ...GRN, segs: [[0,14,4,14,8,15,11,16,14,17,17,17,20,18,23,19,26,19,28,17,30,17,32,19,34,20]] };
const dolT: Thumb = { bg: GREY, base: 8, blue: 8, ...RED, segs: [[0,18,3,22,6,24,10,24,14,26,17,29,20,30,23,30,26,32,29,31,31,33]] };

const listA: Q[] = [
  { name: '日経平均株価', x: true, sub: '寄与度', flag: 'jp', live: false, time: '07/25', thumb: n225, main: ['41,456', '.23'], chg: ['-370', '.11'], tone: 'red', pct: '0.88', hi: ['H:41,773', '.70'], lo: ['L:41,389', '.79'] },
  { name: 'TOPIX', sp: 6, yBtn: true, flag: 'jp', live: false, time: '07/25', thumb: topixT, main: ['2,951', '.86'], chg: ['-25', '.69'], tone: 'red', pct: '0.86', hi: ['H:2,971', '.29'], lo: ['L:2,947', '.65'] },
  { name: 'JPX日経400', flag: 'jp', live: false, time: '07/25', thumb: jpxT, main: ['26,575', '.91'], chg: ['-261', '.72'], tone: 'red', pct: '0.98', hi: ['H:26,769', '.81'], lo: ['L:26,539', '.29'] },
  { name: 'グロース250', yBtn: true, flag: 'jp', live: false, time: '07/25', thumb: growT, main: ['762', '.29'], chg: ['+2', '.81'], tone: 'green', pct: '0.37', hi: ['H:762', '.53'], lo: ['L:757', '.68'], dark: true },
  { name: '為替 ドル円', sub: '為替', flag: 'us', live: true, time: '15:49', thumb: usd, main: ['147.07', '4'], chg: ['+0.08', '8'], tone: 'green', pct: '0.06', hi: ['H:147.49', '4'], lo: ['L:146.81', '2'] },
  { name: '為替 ユーロ円', sub: '為替', flag: 'us', live: true, time: '15:49', thumb: eur, main: ['172.86', '9'], chg: ['+0.18', '2'], tone: 'green', pct: '0.11', hi: ['H:173.17', '5'], lo: ['L:172.47', '8'], dark: true },
];
const listB: Q[] = [
  { name: '日本国債10年利回り', size: 12, sub: '国債 債券', flag: 'jp', live: true, time: '15:48', thumb: bondT, main: ['1.600'], chg: ['0.000'], tone: 'none', hi: ['H:1.610'], lo: ['L:1.586'] },
  { name: <>長期国債先物<NameMini>大取</NameMini></>, flag: 'jp', live: true, time: '15:34', thumb: futT, main: ['137.42'], chg: ['-0.01'], tone: 'red', pct: '0.00', hi: ['H:137.43'], lo: ['L:137.36'] },
  { name: '日経VI', sub: '恐怖指数', flag: 'reaper', live: false, time: '07/25', thumb: viT, main: ['22.17'], chg: ['-0.93'], tone: 'red', pct: '4.03', pctS: 16, hi: ['H:22.59'], lo: ['L:22.15'] },
  { name: 'NT倍率', sub: 'NT倍率', flag: 'jp', live: false, time: '07/25', thumb: ntT, main: ['14.04'], chg: ['-0.01'], tone: 'red', pct: '0.07', hi: ['H:14.09'], lo: ['L:14.03'] },
  { name: 'ドル建て日経平均', size: 15, sub: '日経ドル', flag: 'jp', live: false, time: '07/25', thumb: dolT, main: ['282.11'], chg: ['-2.43'], tone: 'red', pct: '0.85', hi: ['H:283.87'], lo: ['L:281.50'], dark: true },
];

const QuoteRow = ({ q }: { q: Q }) => (
  <WRow>
    <NameCell>
      <NameTop>
        <Name $s={q.size} $sp={q.sp}>{q.name}</Name>
        {q.x && <XDot><XMark /></XDot>}
      </NameTop>
      <SubRow>
        {q.sub && <SubBtn><SubArrow />{q.sub}</SubBtn>}
        {q.yBtn && <SubBtn $w={39}><YIcon />Y!</SubBtn>}
      </SubRow>
    </NameCell>
    <FlagCol>
      <FlagBox $live={q.live}><FlagArt kind={q.flag} live={q.live} /></FlagBox>
      <FlagTime $live={q.live}>{q.time}</FlagTime>
    </FlagCol>
    <ThumbArt t={q.thumb} />
    <DataCell $dark={q.dark}>
      <Main $live={q.live}>{q.main[0]}{q.main[1] && <Dec $s={q.main[1].length === 1 ? 19 : 15}>{q.main[1]}</Dec>}</Main>
      <Chg $tone={q.tone}>{q.chg[0]}{q.chg[1] && <Dec $s={q.chg[1].length === 1 ? 16 : 14}>{q.chg[1]}</Dec>}</Chg>
      <PctSlot>
        <PctBox $tone={q.tone} $s={q.pctS}>
          {q.pct && <Arrow>{q.tone === 'red' ? '▼' : '▲'}</Arrow>}
          {q.pct}
          <Unit>%</Unit>
        </PctBox>
      </PctSlot>
      <HL>
        <span>{q.hi[0]}<HLDec>{q.hi[1]}</HLDec></span>
        <span>{q.lo[0]}<HLDec>{q.lo[1]}</HLDec></span>
      </HL>
    </DataCell>
  </WRow>
);

const Line = ({ d, c, w = 1.1 }: { d: P; c: string; w?: number }) => (
  <path d={smooth(d)} fill="none" stroke={c} strokeWidth={w} />
);

const Chart = () => (
  <ChartSvg viewBox="0 113 1698 1079">
    {times.map(([x]) => <line key={x} x1={x} x2={x} y1="113" y2="1160" stroke="#4d4d55" />)}
    {priceLabels.map(p => <line key={p} x1="70" x2="1690" y1={y(p)} y2={y(p)} stroke="#4d4d55" />)}
    {ticks.map(p => <line key={p} x1={p % 50 === 0 ? 62 : 66} x2="71" y1={y(p)} y2={y(p)} stroke="#5a5a5a" />)}
    {priceLabels.map(p => (
      <AxisText key={p} x="68" y={y(p) + 5.5} textAnchor="end">{p.toLocaleString('en-US')}.0</AxisText>
    ))}
    <line x1="186" x2="1690" y1="455" y2="455" stroke="#58b858" />
    {candles.map((k, i) => {
      const down = k.c > k.o;
      const top = Math.min(k.o, k.c), h = Math.max(Math.abs(k.c - k.o), 1.8);
      const col = down ? '#7fcbee' : '#c4685a';
      return (
        <g key={i}>
          <line x1={k.x} x2={k.x} y1={k.h} y2={k.l} stroke={down ? '#6aa9c8' : '#b5625a'} />
          <rect x={k.x - 2.1} y={top} width="4.2" height={h} fill={down ? col : '#000'} stroke={down ? 'none' : col} strokeWidth="1" />
        </g>
      );
    })}
    <Line d={orangeUp} c="#c98a48" />
    <Line d={orangeLo} c="#c98a48" />
    <Line d={blueUp} c="#5a62c8" />
    <Line d={blueLo} c="#5a62c8" />
    <Line d={longBlue} c="#5666d4" />
    <Line d={purpleUp} c="#9a52c8" />
    <Line d={purpleLo} c="#9a52c8" />
    <Line d={mid} c="#e6b066" w={1.3} />
    <Line d={ma} c="#a4d46a" w={.9} />
    {sarAbove.map((s, i) => <polyline key={i} points={s.join(' ')} fill="none" stroke="#c98a78" strokeWidth="1.5" strokeDasharray="1.5 7" />)}
    {sarBelow.map((s, i) => <polyline key={i} points={s.join(' ')} fill="none" stroke="#d6e4ea" strokeWidth="1.5" strokeDasharray="1.5 7" />)}
    <line x1="70" x2="1690" y1="826" y2="826" stroke="#d8d0c6" strokeWidth="1.3" />
    <rect x="1689" y="826" width="2.5" height="56" fill="none" stroke="#e4d84c" strokeWidth="1.4" />

    <line x1="70" x2="1690" y1="1010" y2="1010" stroke="#8a8a8a" />
    <AxisText x="72" y="1028">MACD</AxisText>
    {[[50, 1049], [0, 1087], [-50, 1125]].map(([v, yy]) => (
      <g key={v}>
        <line x1="70" x2="1690" y1={yy} y2={yy} stroke="#4d4d55" />
        <AxisText x="67" y={yy + 6} textAnchor="end">{v}</AxisText>
      </g>
    ))}
    {hist.map((b, i) => (
      <rect key={i} x={b.x} width="4.1" y={b.h > 0 ? 1087.5 - b.h : 1087.5} height={Math.abs(b.h)} fill={b.h > 0 ? '#8c2a90' : '#4a2fa8'} />
    ))}
    <Line d={macdGreen} c="#9ccf6e" w={1} />
    <Line d={macdOrange} c="#d98a3f" w={1.1} />
    {times.map(([x, t]) => <AxisText key={t} x={x} y="1174" textAnchor="middle">{t}</AxisText>)}
  </ChartSvg>
);

export default function App() {
  return (
    <Page>
      <Global />
      <ToolPanel>
        <ToolRow>
          <LinkSlot><LinkIcon size={14} /></LinkSlot>
          <SelectBox $w={111}>マーケット</SelectBox>
          <SelectBox $w={251} $ml={6}>日経225</SelectBox>
          <SelectBox $w={75} $ml={7}>1分足</SelectBox>
          <NavPair>
            <NavBtn><ChevronLeft size={13} /></NavBtn>
            <NavBtn><ChevronRight size={13} /></NavBtn>
          </NavPair>
          <ToolBtn $w={61} $ml={7} $on>表示期間</ToolBtn>
          <ToolBtn $w={60} $ml={6}>テクニカル</ToolBtn>
          <ToolBtn $w={53} $ml={7} $on>通常</ToolBtn>
          <ToolBtn $w={52}>指数化</ToolBtn>
          <ToolBtn $w={52} $ml={1} $tight>スプレッド</ToolBtn>
        </ToolRow>
        <ToolRow $h={22} $top={6}>
          <Lbl $w={58}>表示期間</Lbl>
          <SelectBox $w={76}>本数指定</SelectBox>
          <Lbl $w={32} $ml={7}>本数</Lbl>
          <NumInput>358</NumInput>
          <Spin><SpinBtn>▼</SpinBtn><SpinBtn>▲</SpinBtn></Spin>
          <Lbl $w={72}>表示期間：</Lbl>
          <Lbl $w={264}>2025/07/24 15:05 ～ 2025/07/25 15:30</Lbl>
          <UndoBtn><Undo2 size={15} strokeWidth={3} /></UndoBtn>
        </ToolRow>
        <ToolRow $h={20} $top={10}>
          <Lbl $w={308} $c="#f0e68c" $s={15}>日経225</Lbl>
          <Lbl $w={69} $c="#3e9a9a">現在値</Lbl>
          <Lbl $w={124}>41,456.23</Lbl>
          <Lbl $w={105} $c="#45c645">-370.11</Lbl>
          <Lbl $w={62} $c="#45c645">-0.88%</Lbl>
          <Lbl>25/07/25　15:30</Lbl>
        </ToolRow>
        <ToolRow $h={20} $top={5}>
          <Lbl $w={63} $c="#3e9a9a">始値</Lbl>
          <Lbl $w={132}>41,760.58  09:00</Lbl>
          <Lbl $w={62} $c="#3e9a9a">高値</Lbl>
          <Lbl $w={133}>41,773.70  09:02</Lbl>
          <Lbl $w={62} $c="#3e9a9a">安値</Lbl>
          <Lbl $w={133}>41,389.79  15:24</Lbl>
          <Lbl $w={88} $c="#3e9a9a">前日終値</Lbl>
          <Lbl $w={82}>41,826.34</Lbl>
          <Lbl $c="#3e9a9a">出来高</Lbl>
        </ToolRow>
      </ToolPanel>

      <Chart />
      <PriceTag>41,456.23</PriceTag>

      <Widget $l={202} $t={765} $w={584}>
        {listA.map((q, i) => <QuoteRow key={i} q={q} />)}
        <WRow>
          <NameCell>
            <NameTop>
              <Name><CfdTag>CFD</CfdTag>日経平均</Name>
              <XDot><XMark /></XDot>
            </NameTop>
          </NameCell>
          <FlagCol>
            <FlagBox $live><FlagArt kind="jp" live /></FlagBox>
            <FlagTime $live>15:49</FlagTime>
          </FlagCol>
          <ThumbArt t={cfdT} />
          <CfdData>
            <Main $live $s={24} $w={103}>41,370<Dec $s={15}>.30</Dec></Main>
            <CompareBox>
              <CompareLabel>日経比:</CompareLabel>
              <CompareVal>-85</CompareVal>
              <PctBox $tone="red" $s={19} $h={26} $w={59}><Arrow $s={11}>▼</Arrow>0.21<Unit>%</Unit></PctBox>
            </CompareBox>
            <CfdHL><span>H:41,496</span><span>L:41,361</span></CfdHL>
          </CfdData>
        </WRow>
      </Widget>

      <Widget $l={982} $t={388} $w={585}>
        {listB.map((q, i) => <QuoteRow key={i} q={q} />)}
      </Widget>

      <PosPanel>
        <PosHead>
          <WinBtn>
            <svg width="18" height="16" viewBox="0 0 18 16" fill="none" stroke="#ddd" strokeWidth="1.4"><path d="M5 4V1h12v9h-3M1 4h13v11H1zM1 6.5h13" /></svg>
          </WinBtn>
          <Teal $ml={10} $mr={13}>現物</Teal>
          <WarnDot>!</WarnDot>
          <Seg>
            <SegBtn>一般</SegBtn>
            <SegBtn $on>特定</SegBtn>
            <SegBtn>NISA</SegBtn>
          </Seg>
        </PosHead>
        <TableHead>
          <Th $w={150}>数量(株/口)</Th>
          <Th $w={190}>平均取得価額(円)</Th>
          <Th $w={165}>評価損益(円)</Th>
        </TableHead>
        <TableBody>
          <Blur $l={90} />
          <Blur $l={255} />
          <GreenVal>-14,940</GreenVal>
        </TableBody>
      </PosPanel>
      <RealPanel>
        <RealTitle>実現損益</RealTitle>
        <FilterRow>
          <FilterLabel $w={94}>商品種類</FilterLabel>
          <FilterSelect $w={132}>全て</FilterSelect>
          <FilterLabel $w={53} $ml={10}>銘柄</FilterLabel>
          <FilterSelect $w={318} $ph>銘柄コード / ティッカー / 銘柄名</FilterSelect>
        </FilterRow>
        <ResultRow>
          <FilterLabel $w={94}>実現損益</FilterLabel>
          <WarnDot $s={20}>!</WarnDot>
          <RedVal $w={143} $ml={36}>+60,480円</RedVal>
          <DateVal>2025/07/25</DateVal>
        </ResultRow>
      </RealPanel>
      <PrevPanel>
        <Teal $s={23}>前日比</Teal>
        <RedVal $s={22.5}>+35,030 円</RedVal>
      </PrevPanel>
      <Highlight $l={1183} $t={46} $w={174} $h={67} />
      <Highlight $l={830} $t={198} $w={448} $h={48} />
      <Highlight $l={830} $t={253} $w={376} $h={35} />
    </Page>
  );
}
